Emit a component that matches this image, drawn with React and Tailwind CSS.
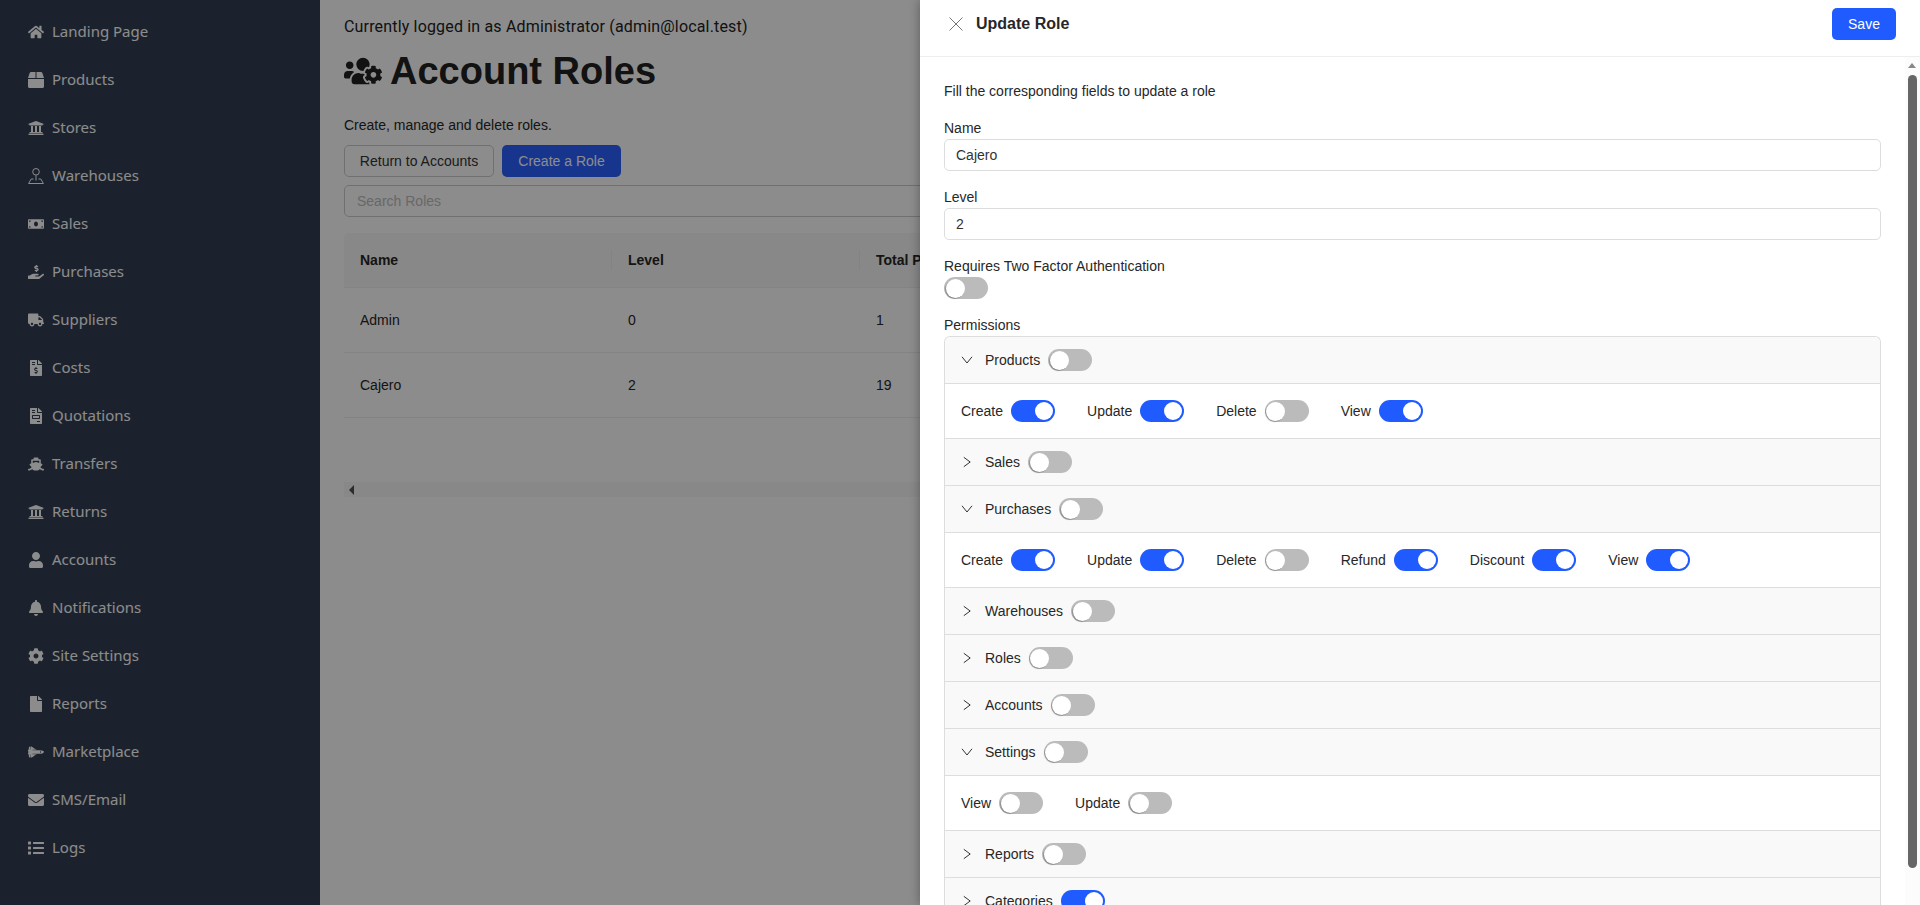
import React from 'react';
import {
  FaHome, FaBox, FaUniversity, FaMoneyBill, FaHandHoldingUsd, FaTruck, FaFileInvoiceDollar,
  FaFileInvoice, FaShip, FaUser, FaBell, FaCog, FaFile, FaSpaceShuttle, FaEnvelope, FaList, FaUsersCog,
} from 'react-icons/fa';

// Warehouses icon is an outlined pin on a map, not in the FA set
const PinIcon = ({ className }) => (
  <svg viewBox="0 0 16 16" fill="none" stroke="currentColor" strokeWidth="1" className={className}>
    <circle cx="8" cy="3.8" r="3.3" />
    <path d="M8 7.2v5.3M5.5 11H3.2L.6 15.5h14.8L12.8 11h-2.3" />
  </svg>
);

const navItems = [
  { label: 'Landing Page', icon: FaHome },
  { label: 'Products', icon: FaBox },
  { label: 'Stores', icon: FaUniversity },
  { label: 'Warehouses', icon: PinIcon },
  { label: 'Sales', icon: FaMoneyBill },
  { label: 'Purchases', icon: FaHandHoldingUsd },
  { label: 'Suppliers', icon: FaTruck },
  { label: 'Costs', icon: FaFileInvoiceDollar },
  { label: 'Quotations', icon: FaFileInvoice },
  { label: 'Transfers', icon: FaShip },
  { label: 'Returns', icon: FaUniversity },
  { label: 'Accounts', icon: FaUser },
  { label: 'Notifications', icon: FaBell },
  { label: 'Site Settings', icon: FaCog },
  { label: 'Reports', icon: FaFile },
  { label: 'Marketplace', icon: FaSpaceShuttle },
  { label: 'SMS/Email', icon: FaEnvelope },
  { label: 'Logs', icon: FaList },
];

const roles = [
  { name: 'Admin', level: 0, total: 1 },
  { name: 'Cajero', level: 2, total: 19 },
];

const permissions = [
  {
    name: 'Products',
    open: true,
    items: [
      { label: 'Create', on: true },
      { label: 'Update', on: true },
      { label: 'Delete', on: false },
      { label: 'View', on: true },
    ],
  },
  { name: 'Sales' },
  {
    name: 'Purchases',
    open: true,
    items: [
      { label: 'Create', on: true },
      { label: 'Update', on: true },
      { label: 'Delete', on: false },
      { label: 'Refund', on: true },
      { label: 'Discount', on: true },
      { label: 'View', on: true },
    ],
  },
  { name: 'Warehouses' },
  { name: 'Roles' },
  { name: 'Accounts' },
  {
    name: 'Settings',
    open: true,
    items: [
      { label: 'View', on: false },
      { label: 'Update', on: false },
    ],
  },
  { name: 'Reports' },
  { name: 'Categories', on: true },
];

const Toggle = ({ on }) => (
  <span
    className={`flex h-[22px] w-[44px] shrink-0 items-center rounded-full ${
      on ? 'justify-end bg-[#1f5bff] pr-[2px]' : 'justify-start bg-[#bbbbbb] pl-[1.5px]'
    }`}
  >
    <span
      className={`rounded-full bg-white ${
        on ? 'h-[18px] w-[18px]' : 'h-[19px] w-[19px] shadow-[-1px_1px_1px_rgba(0,0,0,0.25)]'
      }`}
    />
  </span>
);

const Chevron = ({ open }) => (
  <svg viewBox="0 0 12 12" fill="none" stroke="currentColor" strokeWidth="1" className="h-3 w-3 shrink-0 text-[#333]">
    {open ? <path d="M1 2.8 6 9l5-6.2" /> : <path d="M2.8 1.3 9.2 6l-6.4 4.7" />}
  </svg>
);

const PermissionGroup = ({ group }) => (
  <>
    <div className="flex h-[47px] items-center border-b border-[#dddddd] bg-[#f9f9f9] pl-4">
      <Chevron open={group.open} />
      <span className="ml-3">{group.name}</span>
      <span className="ml-2">
        <Toggle on={group.on} />
      </span>
    </div>
    {group.open && (
      <div className="flex h-[55px] items-center gap-8 border-b border-[#dddddd] bg-white pl-4">
        {group.items.map(item => (
          <div key={item.label} className="flex items-center gap-2">
            <span>{item.label}</span>
            <Toggle on={item.on} />
          </div>
        ))}
      </div>
    )}
  </>
);

const App = () => {
  return (
    <div className="relative flex h-[905px] w-full overflow-hidden bg-white font-['Liberation_Sans',sans-serif] text-sm text-[#272727]">
      <aside className="w-[320px] shrink-0 bg-[#333f53] pt-2 font-['Noto_Sans',sans-serif] text-white">
        {navItems.map(({ label, icon: Icon }) => (
          <div key={label} className="flex h-12 items-center pl-7">
            <Icon className="h-4 w-4 shrink-0" />
            <span className="ml-2 text-[15px]">{label}</span>
          </div>
        ))}
      </aside>

      <main className="min-w-0 flex-1 pl-6 pt-[14px]">
        <p className="h-[26px] font-['Roboto',sans-serif] text-base leading-[26px] tracking-[0.17px] text-[#222]">
          Currently logged in as Administrator (admin@local.test)
        </p>
        <h1 className="mt-[7px] flex h-12 items-center gap-2 text-[38px] font-bold text-[#222]">
          <FaUsersCog className="h-10 w-[38px]" />
          Account Roles
        </h1>
        <p className="mt-5 h-5 leading-5">Create, manage and delete roles.</p>
        <div className="mt-[10px] flex gap-2">
          <button className="h-8 w-[150px] rounded-[5px] border border-[#cccccc] bg-white text-[#333]">Return to Accounts</button>
          <button className="h-8 w-[119px] rounded-[5px] bg-[#2a62ff] text-white">Create a Role</button>
        </div>
        <input
          readOnly
          placeholder="Search Roles"
          className="mt-2 block h-8 w-full rounded-[5px] border border-[#cccccc] bg-white px-3 placeholder:text-[#bdbdbd]"
        />
        <div className="mt-4">
          <div className="flex h-[55px] items-center rounded-t-[5px] border-b border-[#eeeeee] bg-[#f7f7f7] font-bold">
            <div className="flex h-5 w-[268px] items-center border-r border-[#eeeeee] pl-4">Name</div>
            <div className="flex h-5 w-[248px] items-center border-r border-[#eeeeee] pl-4">Level</div>
            <div className="pl-4">Total Permissions</div>
          </div>
          {roles.map(role => (
            <div key={role.name} className="flex h-[65px] items-center border-b border-[#eeeeee]">
              <div className="w-[268px] pl-4">{role.name}</div>
              <div className="w-[248px] pl-4">{role.level}</div>
              <div className="pl-4">{role.total}</div>
            </div>
          ))}
          <div className="mt-[64px] flex h-[15px] items-center bg-[#f8f8f8] pl-[5px]">
            <span className="h-0 w-0 border-y-[5px] border-r-[5px] border-y-transparent border-r-[#505050]" />
          </div>
        </div>
      </main>

      {/* dimmed backdrop of the drawer */}
      <div className="absolute inset-0 bg-black/45" />

      <section className="absolute inset-y-0 right-0 flex w-[1000px] flex-col bg-white shadow-[0_0_10px_rgba(0,0,0,0.35)]">
        <header className="flex h-[57px] shrink-0 items-start justify-between border-b border-[#eeeeee] pr-6">
          <div className="flex h-[48px] items-center">
            <svg viewBox="0 0 16 16" fill="none" stroke="currentColor" strokeWidth="1" className="ml-[28px] h-4 w-4 text-[#777]">
              <path d="M1.5 1.5l13 13M14.5 1.5l-13 13" />
            </svg>
            <span className="ml-[12px] text-base font-bold text-[#272727]">Update Role</span>
          </div>
          <button className="mt-2 h-8 w-16 rounded-[5px] bg-[#1f5bff] text-white">Save</button>
        </header>

        <div className="relative min-h-0 flex-1 overflow-hidden bg-white pl-6 pr-[39px] pt-6">
          <p className="h-5 leading-5">Fill the corresponding fields to update a role</p>
          <label className="mt-[17px] block h-5 leading-5">Name</label>
          <input readOnly value="Cajero" className="mt-[1px] block h-8 w-full rounded-[5px] border border-[#dddddd] px-[11px] text-[#333]" />
          <label className="mt-4 block h-5 leading-5">Level</label>
          <input readOnly value="2" className="mt-[1px] block h-8 w-full rounded-[5px] border border-[#dddddd] px-[11px] text-[#333]" />
          <label className="mt-4 block h-5 leading-5">Requires Two Factor Authentication</label>
          <div className="mt-[1px]">
            <Toggle />
          </div>
          <label className="mt-4 block h-5 leading-5">Permissions</label>
          <div className="mt-[1px] rounded-t-[6px] border-x border-t border-[#dddddd] [&>div:first-child]:rounded-t-[6px]">
            {permissions.map(group => (
              <PermissionGroup key={group.name} group={group} />
            ))}
          </div>

          {/* scrollbar painted over the drawer body */}
          <div className="absolute inset-y-0 right-0 w-[15px] bg-[#fcfcfc]">
            <span className="absolute left-[3px] top-[6px] h-0 w-0 border-x-[4.5px] border-b-[5px] border-x-transparent border-b-[#888888]" />
            <span className="absolute left-[3px] top-[18px] h-[793px] w-[9px] rounded-full bg-[#666666]" />
          </div>
        </div>
      </section>
    </div>
  );
};

export default App;
